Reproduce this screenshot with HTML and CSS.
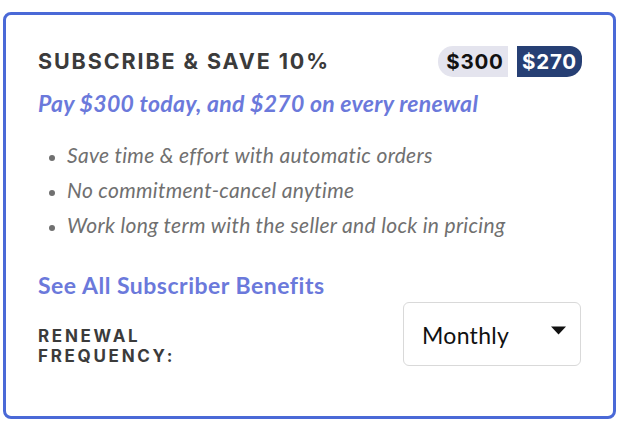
FILE: index.html
```html
<!DOCTYPE html>
<html>
<head>
<meta charset="utf-8">
<link rel="stylesheet" href="styles.css">
</head>
<body>
<div class="card">
  <div class="head">
    <h2 class="title">SUBSCRIBE &amp; SAVE 10%</h2>
    <div class="prices">
      <span class="price old">$300</span>
      <span class="price new">$270</span>
    </div>
  </div>
  <p class="sub">Pay $300 today, and $270 on every renewal</p>
  <ul class="benefits">
    <li>Save time &amp; effort with automatic orders</li>
    <li>No commitment-cancel anytime</li>
    <li>Work long term with the seller and lock in pricing</li>
  </ul>
  <a class="link" href="#">See All Subscriber Benefits</a>
  <div class="freq">
    <div class="freq-label">RENEWAL<br>FREQUENCY:</div>
    <div class="select">
      <span>Monthly</span>
      <svg class="caret" width="15" height="9" viewBox="0 0 15 9"><path d="M0 0.5H15L7.5 8.5Z" fill="#111"/></svg>
    </div>
  </div>
</div>
</body>
</html>
```

FILE: styles.css
```css
html, body { margin: 0; padding: 0; background: #fff; }
body { padding: 12px 15px 9px 3px; }
.card {
  box-sizing: border-box;
  width: 613px;
  height: 407px;
  border: 3px solid #4a69d7;
  border-radius: 8px;
  padding: 0 32px 0 32px;
  font-family: Lato, "Open Sans", sans-serif;
  letter-spacing: 0.3px;
}
.head {
  display: flex;
  justify-content: space-between;
  align-items: center;
  padding-top: 30px;
  height: 32px;
}
.title {
  margin: -1px 0 0;
  font-family: Inter, "DejaVu Sans", sans-serif;
  font-weight: 700;
  font-size: 21.5px;
  letter-spacing: 1.9px;
  color: #3b3b3b;
}
.prices { display: flex; gap: 9px; align-items: center; margin-right: -1px; }
.price {
  box-sizing: border-box;
  font-family: Inter, "DejaVu Sans", sans-serif;
  font-weight: 700;
  font-size: 20.5px;
  letter-spacing: 0.8px;
  line-height: 31px;
  height: 31px;
  text-align: center;
}
.old { width: 70px; background: #e4e4ee; color: #111; border-radius: 15px 0 0 15px; padding-left: 4px; }
.new { width: 65px; background: #263f74; color: #fff; border-radius: 0 12px 15px 0; }
.sub {
  margin: 12px 0 0;
  font-style: italic;
  font-weight: 700;
  font-size: 23px;
  color: #6b79db;
  line-height: 28px;
}
.benefits {
  margin: 20px 0 0;
  padding: 0 0 0 29px;
  color: #707070;
  font-style: italic;
  font-size: 21px;
  line-height: 35px;
}
.benefits li::marker { font-size: 17px; }
.link {
  display: block;
  margin-top: 28.5px;
  font-size: 23px;
  font-weight: 700;
  letter-spacing: 0.5px;
  color: #6b79db;
  text-decoration: none;
  line-height: 28px;
}
.freq {
  display: flex;
  justify-content: space-between;
  align-items: flex-start;
  margin-top: 3px;
}
.freq-label {
  margin-top: 25.5px;
  font-family: Inter, "DejaVu Sans", sans-serif;
  font-weight: 700;
  font-size: 17px;
  line-height: 19.5px;
  letter-spacing: 2.7px;
  color: #3b3b3b;
}
.select {
  box-sizing: border-box;
  width: 178px;
  height: 64px;
  border: 1px solid #d9d9d9;
  border-radius: 6px;
  display: flex;
  align-items: center;
  justify-content: space-between;
  padding: 2px 14px 0 18px;
  font-size: 23px;
  color: #111;
}
.caret { margin-top: -8px; }
```
